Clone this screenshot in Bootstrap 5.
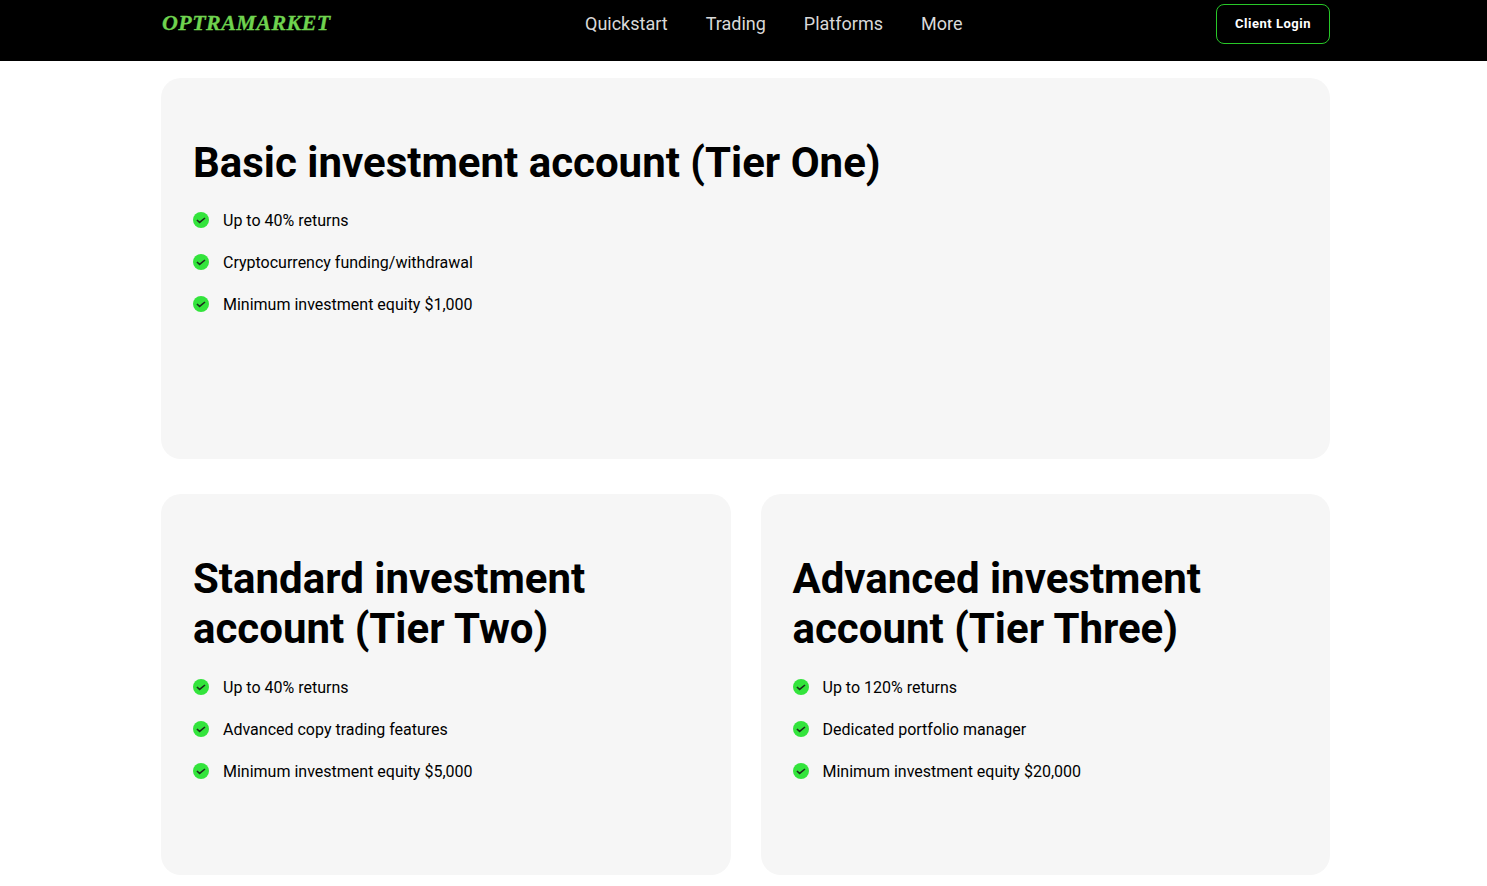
<!DOCTYPE html>
<html lang="en">
<head>
<meta charset="utf-8">
<title>OptraMarket</title>
<link href="https://cdn.jsdelivr.net/npm/bootstrap@5.3.0/dist/css/bootstrap.min.css" rel="stylesheet">
<style>
html,body{overflow:hidden;height:886px}
body{font-family:Roboto,"Liberation Sans",sans-serif;background:#fff;color:#000}
.top-bar{background:#000;height:61px;padding:0}
.wrap{width:1169px;margin:0 0 0 161px;position:relative}
.brand-logo{font-family:"Liberation Serif",serif;font-style:italic;font-weight:700;font-size:22px;letter-spacing:.45px;color:#6fd34f;line-height:24px;padding:0;margin:0 0 15px 1px;width:299px;white-space:nowrap;-webkit-text-stroke:.3px #6fd34f}
.brand-logo:hover{color:#6fd34f}
.top-links{gap:38px;margin-left:124px}
.top-links .nav-link{font-size:18px;line-height:24px;color:#d9d9d9;padding:0;margin-bottom:13px}
.login-btn{width:114px;height:40px;border:1px solid #28c828;border-radius:8px;background:#000;color:#fff;font-size:13px;letter-spacing:.5px;font-weight:700;line-height:38px;padding:0;margin-bottom:13px;text-align:center}
.login-btn:hover{background:#000;color:#fff;border-color:#28c828}
.stack{padding-top:17px;gap:35px}
.duo{gap:30px}
.tier-box{background:#f6f6f6;border-radius:20px;height:381px;padding:60px 32px 0;border:0}
.duo .tier-box{flex:1 1 0;min-width:0}
.tier-box h2{font-size:42px;line-height:50px;font-weight:700;margin:0 0 21px;color:#000}
.duo .tier-box h2{margin-bottom:22px}
.perks{gap:18px;margin:0;padding:0;list-style:none}
.perks li{font-size:16px;line-height:24px;gap:14px}
.tick{width:16px;height:16px;flex:none;margin-bottom:2px}
</style>
</head>
<body>
<nav class="navbar top-bar">
  <div class="wrap d-flex align-items-center h-100">
    <a class="navbar-brand brand-logo" href="#">OPTRAMARKET</a>
    <ul class="nav top-links">
      <li class="nav-item"><a class="nav-link" href="#">Quickstart</a></li>
      <li class="nav-item"><a class="nav-link" href="#">Trading</a></li>
      <li class="nav-item"><a class="nav-link" href="#">Platforms</a></li>
      <li class="nav-item"><a class="nav-link" href="#">More</a></li>
    </ul>
    <a class="btn login-btn ms-auto" href="#">Client Login</a>
  </div>
</nav>
<main class="wrap d-flex flex-column stack">
  <section class="card tier-box">
    <h2>Basic investment account (Tier One)</h2>
    <ul class="perks d-flex flex-column">
      <li class="d-flex align-items-center"><svg class="tick" viewBox="0 0 16 16"><circle cx="8" cy="8" r="8" fill="#33e43c"/><path d="M3.9 8l2.7 2.4 5.4-4.4" fill="none" stroke="#1a2e1c" stroke-width="1.6"/></svg>Up to 40% returns</li>
      <li class="d-flex align-items-center"><svg class="tick" viewBox="0 0 16 16"><circle cx="8" cy="8" r="8" fill="#33e43c"/><path d="M3.9 8l2.7 2.4 5.4-4.4" fill="none" stroke="#1a2e1c" stroke-width="1.6"/></svg>Cryptocurrency funding/withdrawal</li>
      <li class="d-flex align-items-center"><svg class="tick" viewBox="0 0 16 16"><circle cx="8" cy="8" r="8" fill="#33e43c"/><path d="M3.9 8l2.7 2.4 5.4-4.4" fill="none" stroke="#1a2e1c" stroke-width="1.6"/></svg>Minimum investment equity $1,000</li>
    </ul>
  </section>
  <div class="d-flex duo">
    <section class="card tier-box">
      <h2>Standard investment account (Tier Two)</h2>
      <ul class="perks d-flex flex-column">
        <li class="d-flex align-items-center"><svg class="tick" viewBox="0 0 16 16"><circle cx="8" cy="8" r="8" fill="#33e43c"/><path d="M3.9 8l2.7 2.4 5.4-4.4" fill="none" stroke="#1a2e1c" stroke-width="1.6"/></svg>Up to 40% returns</li>
        <li class="d-flex align-items-center"><svg class="tick" viewBox="0 0 16 16"><circle cx="8" cy="8" r="8" fill="#33e43c"/><path d="M3.9 8l2.7 2.4 5.4-4.4" fill="none" stroke="#1a2e1c" stroke-width="1.6"/></svg>Advanced copy trading features</li>
        <li class="d-flex align-items-center"><svg class="tick" viewBox="0 0 16 16"><circle cx="8" cy="8" r="8" fill="#33e43c"/><path d="M3.9 8l2.7 2.4 5.4-4.4" fill="none" stroke="#1a2e1c" stroke-width="1.6"/></svg>Minimum investment equity $5,000</li>
      </ul>
    </section>
    <section class="card tier-box">
      <h2>Advanced investment account (Tier Three)</h2>
      <ul class="perks d-flex flex-column">
        <li class="d-flex align-items-center"><svg class="tick" viewBox="0 0 16 16"><circle cx="8" cy="8" r="8" fill="#33e43c"/><path d="M3.9 8l2.7 2.4 5.4-4.4" fill="none" stroke="#1a2e1c" stroke-width="1.6"/></svg>Up to 120% returns</li>
        <li class="d-flex align-items-center"><svg class="tick" viewBox="0 0 16 16"><circle cx="8" cy="8" r="8" fill="#33e43c"/><path d="M3.9 8l2.7 2.4 5.4-4.4" fill="none" stroke="#1a2e1c" stroke-width="1.6"/></svg>Dedicated portfolio manager</li>
        <li class="d-flex align-items-center"><svg class="tick" viewBox="0 0 16 16"><circle cx="8" cy="8" r="8" fill="#33e43c"/><path d="M3.9 8l2.7 2.4 5.4-4.4" fill="none" stroke="#1a2e1c" stroke-width="1.6"/></svg>Minimum investment equity $20,000</li>
      </ul>
    </section>
  </div>
</main>
<script src="https://cdn.jsdelivr.net/npm/bootstrap@5.3.0/dist/js/bootstrap.bundle.min.js"></script>
</body>
</html>
